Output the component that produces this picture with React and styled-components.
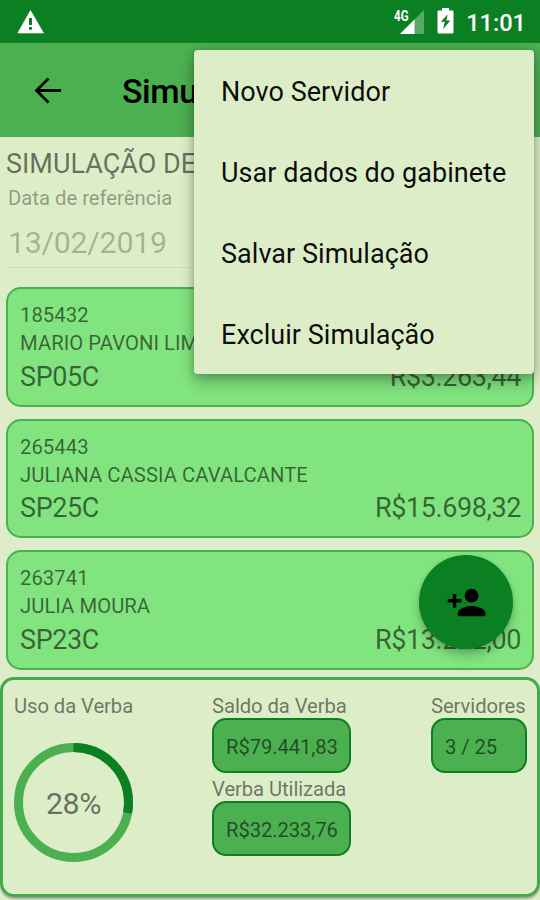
import styled, { createGlobalStyle } from 'styled-components';

const GlobalStyle = createGlobalStyle`
  * {
    box-sizing: border-box;
  }

  body {
    margin: 0;
    background-color: #dcedc8;
    font-family: Roboto, "Liberation Sans", sans-serif;
  }
`;

const Screen = styled.div`
  position: relative;
  display: flex;
  flex-direction: column;
  width: 540px;
  height: 900px;
  overflow: hidden;
  background-color: #dcedc8;
`;

const StatusBar = styled.div`
  display: flex;
  align-items: center;
  justify-content: space-between;
  height: 43px;
  padding: 0 14px 0 17px;
  flex-shrink: 0;
  background-color: #0a8023;
  color: white;
`;

const StatusIcons = styled.div`
  display: flex;
  align-items: center;
  height: 43px;
  gap: 12px;

  svg {
    display: block;
  }
`;

const Clock = styled.span`
  padding-top: 3px;
  font-size: 23.6px;
  line-height: 28px;
  font-weight: 500;
`;

const Toolbar = styled.div`
  display: flex;
  align-items: center;
  height: 94px;
  padding-left: 27px;
  flex-shrink: 0;
  background-color: #4caf50;

  svg {
    display: block;
  }
`;

const ToolbarTitle = styled.h1`
  margin: 3px 0 0 54px;
  font-size: 33.75px;
  font-weight: 500;
  line-height: 40px;
  letter-spacing: -0.4px;
  color: #000;
`;

const Header = styled.div`
  height: 150px;
  padding: 11px 8px 0;
  flex-shrink: 0;
`;

const Title = styled.h2`
  margin: 0 0 6px -2px;
  font-size: 27px;
  font-weight: 400;
  line-height: 32px;
  color: rgba(0, 0, 0, 0.54);
`;

const Label = styled.div`
  font-size: 20.25px;
  line-height: 24px;
  letter-spacing: ${(props) => (props.$faded ? '0' : '-0.08px')};
  color: ${(props) => (props.$faded ? 'rgba(0, 0, 0, 0.36)' : 'rgba(0, 0, 0, 0.52)')};
  white-space: nowrap;
`;

const DateField = styled.div`
  height: 58px;
  padding-top: 15px;
  border-bottom: 1px solid rgba(0, 0, 0, 0.05);
  font-size: 30.4px;
  line-height: 36px;
  letter-spacing: -0.3px;
  color: rgba(0, 0, 0, 0.26);
`;

const List = styled.div`
  display: flex;
  flex-direction: column;
  gap: 12px;
  padding: 0 6px;
`;

const Card = styled.div`
  height: 119.6px;
  padding: 12px 11px 0 12px;
  flex-shrink: 0;
  background-color: #81e47e;
  border: 2px solid #4caf50;
  border-radius: 15px;
  color: rgba(0, 0, 0, 0.56);
`;

const CardLine = styled.div`
  font-size: 20.25px;
  line-height: 28.3px;
  letter-spacing: 0.05px;
`;

const CardFooter = styled.div`
  display: flex;
  justify-content: space-between;
  margin-top: 3px;
  font-size: 27px;
  line-height: 32px;
  letter-spacing: -0.4px;
`;

const Summary = styled.div`
  display: flex;
  height: 220px;
  margin-top: 7px;
  padding: 14px 10px 0 11px;
  flex-shrink: 0;
  border: 3px solid #43aa4b;
  border-radius: 14px;
  box-shadow: 0 2px 2px rgba(0, 0, 0, 0.28);
`;

const Column = styled.div`
  display: flex;
  flex-direction: column;
  width: ${(props) => props.$width};
  margin-left: ${(props) => props.$gap || '0'};
`;

const Chip = styled.div`
  height: 55px;
  margin-bottom: 4.5px;
  padding-left: 12px;
  background-color: #4caf50;
  border: 2px solid #0a8023;
  border-radius: 14px;
  font-size: 20.25px;
  line-height: 54px;
  letter-spacing: -0.1px;
  color: rgba(0, 0, 0, 0.57);
`;

const Gauge = styled.svg`
  display: block;
  margin-top: 25px;
`;

const Menu = styled.div`
  position: absolute;
  top: 50px;
  left: 194px;
  z-index: 3;
  width: 340px;
  background-color: #dcedc8;
  border-radius: 4px;
  box-shadow: 0 9px 15px rgba(0, 0, 0, 0.24), 0 1px 9px rgba(0, 0, 0, 0.22);
`;

const MenuItem = styled.div`
  height: 81px;
  padding-left: 27px;
  font-size: 27px;
  line-height: 84px;
  letter-spacing: 0.04px;
  color: rgba(0, 0, 0, 0.95);
`;

const Fab = styled.button`
  position: absolute;
  top: 555px;
  left: 419px;
  z-index: 2;
  display: flex;
  align-items: center;
  justify-content: center;
  width: 94px;
  height: 94px;
  padding: 0;
  border: none;
  border-radius: 50%;
  background-color: #0a8023;
  box-shadow: 0 7px 10px rgba(0, 0, 0, 0.2), 0 1px 4px rgba(0, 0, 0, 0.14);
`;

const servidores = [
  { id: '185432', nome: 'MARIO PAVONI LIM', cargo: 'SP05C', valor: 'R$3.263,44' },
  { id: '265443', nome: 'JULIANA CASSIA CAVALCANTE', cargo: 'SP25C', valor: 'R$15.698,32' },
  { id: '263741', nome: 'JULIA MOURA', cargo: 'SP23C', valor: 'R$13.222,00' },
];

const opcoes = ['Novo Servidor', 'Usar dados do gabinete', 'Salvar Simulação', 'Excluir Simulação'];

const UsoVerba = ({ percent }) => {
  const r = 55;
  const total = 2 * Math.PI * r;

  return (
    <Gauge width="119" height="119" viewBox="0 0 119 119">
      <circle cx="59.5" cy="59.5" r={r} fill="none" stroke="#4caf50" strokeWidth="9" />
      <circle
        cx="59.5"
        cy="59.5"
        r={r}
        fill="none"
        stroke="#0a8023"
        strokeWidth="9"
        strokeDasharray={`${(total * percent) / 100} ${total}`}
        transform="rotate(-90 59.5 59.5)"
      />
      <text x="59.5" y="71" textAnchor="middle" fontSize="30.4" letterSpacing="-0.4" fill="rgba(0,0,0,0.54)">
        {percent}%
      </text>
    </Gauge>
  );
};

const App = () => {
  return (
    <>
      <GlobalStyle />
      <Screen>
        <StatusBar>
          <StatusIcons>
            <svg width="28" height="26" viewBox="0 0 28 26">
              <path d="M13.5 1.500L26.500 24H.8z" fill="#fff" stroke="#fff" strokeWidth="0.6" strokeLinejoin="round" />
              <path d="M12 9h3v7h-3zM12 18h3v2.800h-3z" fill="#0a8023" />
            </svg>
          </StatusIcons>
          <StatusIcons>
            <svg width="32" height="28" viewBox="0 0 32 28">
              <path d="M31 2V26H7z" fill="#fff" fillOpacity="0.32" />
              <path d="M21.500 11.500V26H7z" fill="#fff" />
              <text x="1" y="13.300" fontSize="14.5" fontWeight="700" textLength="14.5" lengthAdjust="spacingAndGlyphs" fill="#fff">4G</text>
            </svg>
            <svg width="17" height="27" viewBox="0 0 17 27">
              <path d="M5 0h7v2.500h3.500q1 0 1 1V24q0 1.500-1.500 1.500H2Q.5 25.500.5 24V3.500q0-1 1-1H5z" fill="#fff" />
              <path d="M10.800 6.200L3.800 13.800h4L6 21.300l7.300-8.800H9.200z" fill="#0a8023" />
            </svg>
            <Clock>11:01</Clock>
          </StatusIcons>
        </StatusBar>
        <Toolbar>
          <svg width="41" height="41" viewBox="0 0 41 41">
            <path d="M34 20.500H9.500M21.500 8.500L9.500 20.500l12 12" fill="none" stroke="#000" strokeWidth="2.8" />
          </svg>
          <ToolbarTitle>Simu</ToolbarTitle>
        </Toolbar>
        <Header>
          <Title>SIMULAÇÃO DE</Title>
          <Label $faded>Data de referência</Label>
          <DateField>13/02/2019</DateField>
        </Header>
        <List>
          {servidores.map((s) => (
            <Card key={s.id}>
              <CardLine>{s.id}</CardLine>
              <CardLine>{s.nome}</CardLine>
              <CardFooter>
                <span>{s.cargo}</span>
                <span>{s.valor}</span>
              </CardFooter>
            </Card>
          ))}
        </List>
        <Summary>
          <Column $width="119px">
            <Label>Uso da Verba</Label>
            <UsoVerba percent={28} />
          </Column>
          <Column $width="139px" $gap="79px">
            <Label>Saldo da Verba</Label>
            <Chip>R$79.441,83</Chip>
            <Label>Verba Utilizada</Label>
            <Chip>R$32.233,76</Chip>
          </Column>
          <Column $width="96px" $gap="80px">
            <Label>Servidores</Label>
            <Chip>3 / 25</Chip>
          </Column>
        </Summary>
        <Fab aria-label="Novo Servidor">
          <svg width="41" height="41" viewBox="0 0 24 24">
            <path d="M15 12c2.210 0 4-1.790 4-4s-1.790-4-4-4-4 1.790-4 4 1.790 4 4 4zm-9-2V7H4v3H1v2h3v3h2v-3h3v-2H6zm9 4c-2.670 0-8 1.340-8 4v2h16v-2c0-2.660-5.330-4-8-4z" />
          </svg>
        </Fab>
        <Menu>
          {opcoes.map((opcao) => (
            <MenuItem key={opcao}>{opcao}</MenuItem>
          ))}
        </Menu>
      </Screen>
    </>
  );
};

export default App;
